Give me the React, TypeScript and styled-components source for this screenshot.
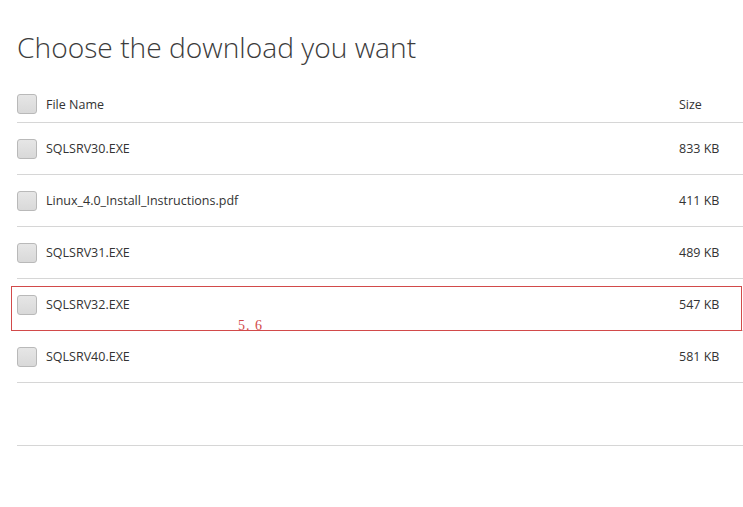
import React, { FunctionComponent } from 'react';
import styled, { createGlobalStyle } from 'styled-components';

const GlobalStyle = createGlobalStyle`
  html, body {
    margin: 0;
    padding: 0;
    background: #ffffff;
  }
`;

const Page = styled('div')`
  position: relative;
  width: 743px;
  height: 507px;
  padding-left: 17px;
  box-sizing: border-box;
  font-family: 'Open Sans', 'Noto Sans', sans-serif;
  color: #333333;
  overflow: hidden;
`;

const Title = styled('h1')`
  margin: 0;
  padding-top: 27px;
  height: 86px;
  box-sizing: border-box;
  font-family: 'Open Sans', sans-serif;
  font-weight: 300;
  font-size: 28.2px;
  line-height: 40px;
  color: #3c3c3c;
`;

const Table = styled('div')`
  display: flex;
  flex-direction: column;
`;

const Row = styled('div')<{ $height: number }>`
  display: grid;
  grid-template-columns: 29px 1fr 64px;
  align-items: center;
  height: ${(p) => p.$height}px;
  border-bottom: 1px solid #d6d6d6;
  box-sizing: border-box;
  font-size: 12.5px;
`;

const Check = styled('span')`
  width: 20px;
  height: 20px;
  box-sizing: border-box;
  border: 1px solid #b9b9b9;
  border-radius: 3px;
  background: linear-gradient(#e6e6e6, #d9d9d9);
`;

const Cell = styled('span')`
  white-space: nowrap;
`;

const Highlight = styled('div')`
  position: absolute;
  left: 11px;
  top: 286px;
  width: 731px;
  height: 45px;
  box-sizing: border-box;
  border: 1px solid #d24a4a;
`;

const Note = styled('span')`
  position: absolute;
  left: 238px;
  top: 318px;
  font-family: 'Liberation Serif', serif;
  font-size: 14px;
  color: #d24a4a;
  letter-spacing: 1px;
`;

const files = [
  { name: 'SQLSRV30.EXE', size: '833 KB' },
  { name: 'Linux_4.0_Install_Instructions.pdf', size: '411 KB' },
  { name: 'SQLSRV31.EXE', size: '489 KB' },
  { name: 'SQLSRV32.EXE', size: '547 KB' },
  { name: 'SQLSRV40.EXE', size: '581 KB' },
];

const App: FunctionComponent = () => {
  return (
    <Page>
      <GlobalStyle />
      <Title>Choose the download you want</Title>
      <Table>
        <Row $height={37}>
          <Check />
          <Cell>File Name</Cell>
          <Cell>Size</Cell>
        </Row>
        {files.map((f) => (
          <Row key={f.name} $height={52}>
            <Check />
            <Cell>{f.name}</Cell>
            <Cell>{f.size}</Cell>
          </Row>
        ))}
        <Row $height={63} />
      </Table>
      <Highlight />
      <Note>5. 6</Note>
    </Page>
  );
};

export default App;
